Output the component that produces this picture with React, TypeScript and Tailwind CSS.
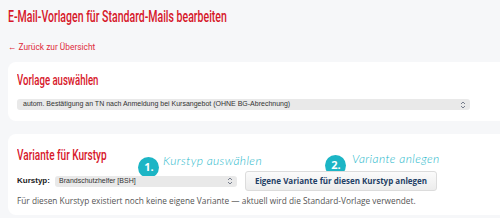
import React from 'react';

const condensed = { fontFamily: '"Roboto", "Liberation Sans", sans-serif' };

function Chevrons() {
  return (
    <svg width="6" height="8" viewBox="0 0 6 8" className="text-gray-500">
      <path d="M1 3 L3 1 L5 3 M1 5 L3 7 L5 5" fill="none" stroke="currentColor" strokeWidth="0.9" />
    </svg>
  );
}

function Badge({ n }: { n: string }) {
  return (
    <span className="absolute flex h-[21px] w-[21px] items-center justify-center rounded-full bg-[#1cb5c5] pl-[1px] text-[11px] font-bold text-white font-['Open_Sans',sans-serif]">
      {n}
    </span>
  );
}

export default function App() {
  return (
    <div className="min-h-screen bg-[#f6f7f9] pl-2 pt-[5px] font-['Liberation_Sans',sans-serif]">
      <h1 className="h-[22px] whitespace-nowrap text-[17px] font-medium leading-[22px] text-[#d7172a]">
        <span className="inline-block origin-left scale-x-[0.62]" style={condensed}>
          E-Mail-Vorlagen für Standard-Mails bearbeiten
        </span>
      </h1>
      <a className="mt-[15px] block whitespace-nowrap text-[9px] leading-[10px] text-[#e02a3c]">
        <span className="inline-block origin-left scale-x-[0.93]" style={condensed}>
          ← Zurück zur Übersicht
        </span>
      </a>

      {/* Vorlage auswählen */}
      <section className="mt-[10px] rounded-l-lg bg-white pb-[11px] pl-[9px] pt-[9px]">
        <h2 className="h-[18px] whitespace-nowrap text-[15px] font-medium leading-[18px] text-[#d7172a]">
          <span className="inline-block origin-left scale-x-[0.64]" style={condensed}>
            Vorlage auswählen
          </span>
        </h2>
        <div className="mt-[10px] flex h-[11px] w-[453px] items-center justify-between rounded-[3px] bg-[#e9e9e9] pl-[6px] pr-[4px] text-[7px] text-[#333]">
          <span>autom. Bestätigung an TN nach Anmeldung bei Kursangebot (OHNE BG-Abrechnung)</span>
          <Chevrons />
        </div>
      </section>

      {/* Variante für Kurstyp */}
      <section className="relative mt-[13px] rounded-l-lg bg-white pb-[9px] pl-[9px] pt-[12px]">
        <h2 className="h-[18px] whitespace-nowrap text-[15px] font-medium leading-[18px] text-[#d7172a]">
          <span className="inline-block origin-left scale-x-[0.67]" style={condensed}>
            Variante für Kurstyp
          </span>
        </h2>
        <div className="relative z-10 mt-[7px] flex items-center">
          <span className="w-[38px] text-[8px] font-bold text-[#222]">Kurstyp:</span>
          <div className="flex h-[11px] w-[182px] items-center justify-between rounded-[3px] bg-[#e9e9e9] pl-[4px] pr-[4px] text-[7px] text-[#333]">
            <span>Brandschutzhelfer [BSH]</span>
            <Chevrons />
          </div>
          <button className="ml-[8px] h-[20px] w-[192px] rounded-[3px] border border-[#dcdcdc] bg-gradient-to-b from-[#fbfbfb] to-[#ececec] text-[8px] font-bold text-[#1f3f66] font-['Open_Sans',sans-serif]">
            Eigene Variante für diesen Kurstyp anlegen
          </button>
        </div>
        <p className="mt-[5px] whitespace-nowrap text-[8.3px] leading-[10px] text-[#555] font-['Open_Sans',sans-serif]">
          Für diesen Kurstyp existiert noch keine eigene Variante — aktuell wird die Standard-Vorlage verwendet.
        </p>

        <div className="absolute left-[130px] top-[23px]">
          <Badge n="1." />
        </div>
        <span className="absolute left-[155px] top-[18px] whitespace-nowrap text-[12px] font-light italic tracking-[0.4px] text-[#27b8cb] font-['Lato',sans-serif]">
          Kurstyp auswählen
        </span>
        <div className="absolute left-[317px] top-[21px]">
          <Badge n="2." />
        </div>
        <span className="absolute left-[344px] top-[16px] whitespace-nowrap text-[12px] font-light italic tracking-[0.4px] text-[#27b8cb] font-['Lato',sans-serif]">
          Variante anlegen
        </span>
      </section>
    </div>
  );
}
